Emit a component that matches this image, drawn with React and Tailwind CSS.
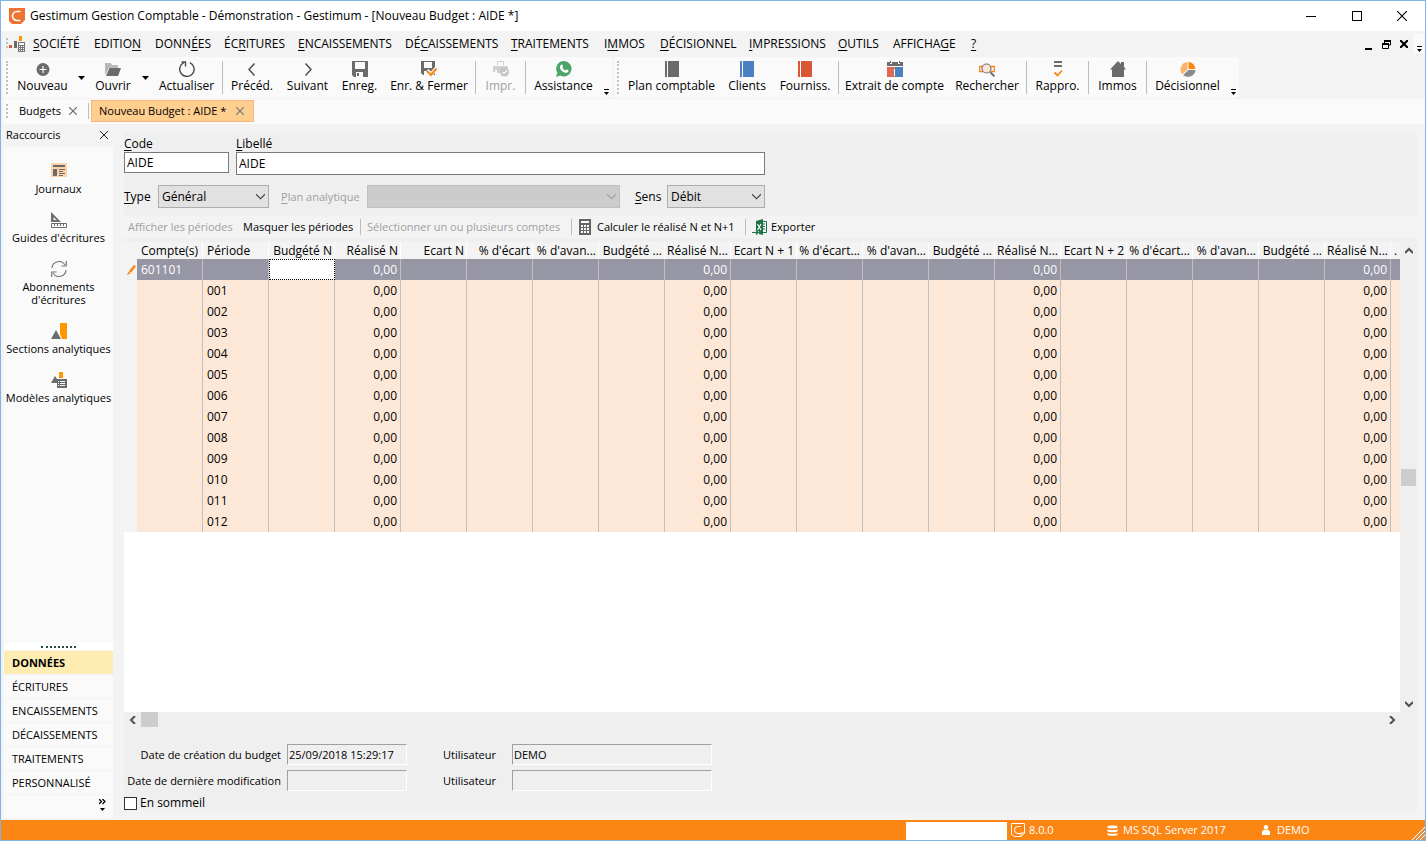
import React, { useState } from 'react';
import clsx from 'clsx';

const MENUS = [
  { label: 'SOCIÉTÉ', key: 0, width: 'w-[61px]' },
  { label: 'EDITION', key: 6, width: 'w-[61px]' },
  { label: 'DONNÉES', key: 4, width: 'w-[69px]' },
  { label: 'ÉCRITURES', key: 2, width: 'w-[74px]' },
  { label: 'ENCAISSEMENTS', key: 0, width: 'w-[107px]' },
  { label: 'DÉCAISSEMENTS', key: 2, width: 'w-[106px]' },
  { label: 'TRAITEMENTS', key: 0, width: 'w-[93px]' },
  { label: 'IMMOS', key: 1, width: 'w-[56px]' },
  { label: 'DÉCISIONNEL', key: 0, width: 'w-[89px]' },
  { label: 'IMPRESSIONS', key: 0, width: 'w-[89px]' },
  { label: 'OUTILS', key: 0, width: 'w-[55px]' },
  { label: 'AFFICHAGE', key: 7, width: 'w-[78px]' },
  { label: '?', key: 0, width: 'w-[24px]' },
];

const COLUMNS = [
  'Compte(s)', 'Période', 'Budgété N', 'Réalisé N', 'Ecart N', "% d'écart", "% d'avan...",
  'Budgété ...', 'Réalisé N...', 'Ecart N + 1', "% d'écart...", "% d'avan...",
  'Budgété ...', 'Réalisé N...', 'Ecart N + 2', "% d'écart...", "% d'avan...",
  'Budgété ...', 'Réalisé N...',
];

const PERIODS = ['001', '002', '003', '004', '005', '006', '007', '008', '009', '010', '011', '012'];

const SECTIONS = ['DONNÉES', 'ÉCRITURES', 'ENCAISSEMENTS', 'DÉCAISSEMENTS', 'TRAITEMENTS', 'PERSONNALISÉ'];

// Texte avec la lettre d'accès rapide soulignée
const Mnemonic = ({ text, at = 0 }) => (
  <span>
    {text.slice(0, at)}
    <span className="underline underline-offset-2">{text[at]}</span>
    {text.slice(at + 1)}
  </span>
);

const Svg = ({ children, className = 'w-4 h-4', viewBox = '0 0 16 16' }) => (
  <svg className={clsx('shrink-0', className)} viewBox={viewBox} fill="none" aria-hidden="true">
    {children}
  </svg>
);

/* ---------- Icônes ---------- */

const NewIcon = () => (
  <Svg>
    <circle cx="8" cy="8.5" r="6.5" fill="#6b6b6b" />
    <path d="M8 5v7M4.5 8.5h7" stroke="#fff" strokeWidth="1.2" />
  </Svg>
);

const OpenIcon = () => (
  <Svg>
    <path d="M0 2h6l1 2h6v3H4l-3 6H0z" fill="#b9b9b9" />
    <path d="M4.5 7H16l-3 8H1z" fill="#6b6b6b" />
  </Svg>
);

const RefreshIcon = () => (
  <Svg>
    <path d="M10.8 1.6A7.2 7.2 0 1 1 4.8 1.7" stroke="#4a4a4a" strokeWidth="1.4" />
    <path d="M2.5 1h4v4.5" stroke="#4a4a4a" strokeWidth="1.4" />
  </Svg>
);

const PrevIcon = () => (
  <Svg><path d="M10.5 2.5L5 8.5l5.5 6" stroke="#4a4a4a" strokeWidth="1.4" /></Svg>
);

const NextIcon = () => (
  <Svg><path d="M5.5 2.5L11 8.5l-5.5 6" stroke="#4a4a4a" strokeWidth="1.4" /></Svg>
);

const SaveIcon = () => (
  <Svg>
    <path d="M0 0h16v16H2l-2-2z" fill="#6b6b6b" />
    <path d="M3 1h10v7H3zM4 11h7v5H4z" fill="#fafafa" />
    <path d="M5 12h2v3H5z" fill="#6b6b6b" />
  </Svg>
);

const SaveCloseIcon = () => (
  <Svg>
    <path d="M0 0h14v14H2l-2-2z" fill="#6b6b6b" />
    <path d="M3 1h8v6H3zM3 10h5v4H3z" fill="#fafafa" />
    <path d="M6 9.5l4 4L16 6.500" stroke="#fafafa" strokeWidth="4" />
    <path d="M6 10l4 4 5.500-6.500" stroke="#fb8614" strokeWidth="2.2" />
  </Svg>
);

const PrintIcon = () => (
  <Svg>
    <path d="M4.5 4V.5h6V4" stroke="#d0d0d0" />
    <path d="M0 5h15v3h-5l-3 4H4V9H2v2H0z" fill="#d0d0d0" />
    <circle cx="11.5" cy="11" r="4.5" fill="#c4c4c4" />
    <path d="M9.5 11l1.5 1.5 3-3" stroke="#fafafa" strokeWidth="1.2" />
  </Svg>
);

const PhoneIcon = () => (
  <Svg>
    <path d="M8 0a7.700 7.700 0 1 1-3.600 14.600L0 16l1.400-4.200A7.700 7.700 0 0 1 8 0z" fill="#4aa566" />
    <path
      d="M5.300 3.800c.7-.6 1.200-.2 1.700 1.200.2.600-.1.900-.6 1.500.7 1.400 1.700 2.300 3.100 2.900.7-.8.900-1.100 1.500-.8 1.500.7 1.700.9 1.400 1.700-.5 1.400-2.100 1.900-3.900 1.200C6.300 10.700 4.600 9 4 7c-.3-1.300.1-2.500 1.300-3.200z"
      fill="#fff"
    />
  </Svg>
);

const BookIcon = ({ color }) => (
  <Svg>
    <path d="M1 0h2v16H1zM4 0h11v16H4z" fill={color} />
  </Svg>
);

const StatementIcon = () => (
  <Svg>
    <path d="M0 1h3v2h2V1h6v2h2V1h3v4H0z" fill="#6b6b6b" />
    <path d="M3.5 0v2M12.5 0v2" stroke="#6b6b6b" />
    <path d="M0 6h8v10H0z" fill="#de6a55" />
    <path d="M8 6h8v10H8z" fill="#4a7fc1" />
    <path d="M7.5 8v7" stroke="#fff" />
  </Svg>
);

const SearchIcon = () => (
  <Svg>
    <path d="M4 5.5H.5v5H4M12 5.5h3.500v5H12" stroke="#fb8614" strokeWidth="1.4" />
    <circle cx="7.5" cy="7.5" r="4.5" fill="#fde6d6" stroke="#777" strokeWidth="1.2" />
    <path d="M11 11l4.500 4.500" stroke="#777" strokeWidth="2" />
  </Svg>
);

const MatchIcon = () => (
  <Svg>
    <path d="M4 0h8v2H4zM4 4h8v2H4z" fill="#6b6b6b" />
    <path d="M4.500 11.500L7.500 14.500l4.500-5" stroke="#fb8614" strokeWidth="1.8" />
  </Svg>
);

const HouseIcon = () => (
  <Svg>
    <path d="M8 0l3 3V1h3v5l2 2.500h-2V16H2V8.500H0z" fill="#6b6b6b" />
  </Svg>
);

const PieIcon = () => (
  <Svg>
    <path d="M7.500 1v7.200L2.300 13.300A7.500 7.500 0 0 1 7.500 1z" fill="#fbb26a" />
    <path d="M8.500 1a7.300 7.300 0 0 1 7 7h-7z" fill="#fb8614" />
    <path d="M15.500 9a7.500 7.500 0 0 1-12.300 5L8.300 9z" fill="#8a8a8a" />
  </Svg>
);

const LogoIcon = () => (
  <Svg className="w-4 h-4">
    <path d="M0 0h16v12l-4 4H3l-3-3z" fill="#ee7330" />
    <path d="M11.500 3.500H8a4.500 4.500 0 0 0 0 9h3.500" stroke="#fff" strokeWidth="1.6" />
  </Svg>
);

const MenuAppIcon = () => (
  <Svg className="w-[19px] h-4" viewBox="0 0 19 16">
    <path d="M0 2h2v2H0zM0 6h2v2H0zM0 10h2v2H0z" fill="#c0c0c0" />
    <path d="M3 9h3v3H3z" fill="#d95b3a" />
    <path d="M8 5h3v7H8z" fill="#6b6b6b" />
    <path d="M13 0h3v5h-3z" fill="#ff9800" />
    <path d="M12 6h7v10h-7z" fill="#777" />
    <path d="M13 7h5v2h-5zM13 10h1v1h-1zM15 10h1v1h-1zM17 10h1v1h-1zM13 12h1v1h-1zM15 12h1v1h-1zM17 12h1v1h-1zM13 14h1v1h-1zM15 14h1v1h-1zM17 14h1v1h-1z" fill="#fff" />
  </Svg>
);

const JournalIcon = () => (
  <Svg>
    <path d="M0 0h16v14H0z" fill="#fcd3a8" />
    <path d="M2 2h12v2H2zM2 6h4v7H2zM8 6h6v1H8zM8 8h4v1H8zM8 10h6v1H8zM8 12h4v1H8z" fill="#6b6b6b" />
  </Svg>
);

const RulerIcon = () => (
  <Svg>
    <path d="M0 0l10 10H0zM2.500 5v3h3z" fill="#6b6b6b" fillRule="evenodd" />
    <path d="M.5 11.500h15v4H.5z" stroke="#6b6b6b" />
    <path d="M3.500 12v2M6.500 12v2M9.500 12v2M12.500 12v2" stroke="#6b6b6b" />
  </Svg>
);

const LoopIcon = () => (
  <Svg>
    <path d="M1 7a7 7 0 0 1 13-3M15 9a7 7 0 0 1-13 3" stroke="#777" strokeWidth="1.2" />
    <path d="M15.300 0v5h-5M.7 16v-5h5" stroke="#777" strokeWidth="1.2" />
  </Svg>
);

const SectionIcon = () => (
  <Svg>
    <path d="M9 0h7v16h-5L9 11z" fill="#ff9800" />
    <path d="M0 16l5-9 5 9z" fill="#6b6b6b" />
  </Svg>
);

const ModelIcon = () => (
  <Svg>
    <path d="M8 0h4v6H8z" fill="#ff9800" />
    <path d="M0 11l4-7 2 3v4z" fill="#6b6b6b" />
    <path d="M6 7h10v9H6z" fill="#6b6b6b" />
    <path d="M7 9h1v1H7zM9 9h5v1H9zM7 11h1v1H7zM9 11h5v1H9zM7 13h1v1H7zM9 13h5v1H9z" fill="#fff" />
  </Svg>
);

const CalculatorIcon = () => (
  <Svg className="w-3 h-4" viewBox="0 0 12 16">
    <path d="M0 0h12v16H0z" fill="#666" />
    <path d="M2 2h8v2H2zM2 6h2v2H2zM5 6h2v2H5zM8 6h2v2H8zM2 9h2v2H2zM5 9h2v2H5zM8 9h2v2H8zM2 12h2v2H2zM5 12h2v2H5zM8 12h2v2H8z" fill="#fff" />
  </Svg>
);

const ExcelIcon = () => (
  <Svg>
    <path d="M10.500 2.500h4v11h-4" stroke="#1e7145" />
    <path d="M11 5h2M11 7.500h2M11 10h2" stroke="#1e7145" strokeWidth="1.2" />
    <path d="M4 2l7-2v16l-4-1v-3H4z" fill="#1e7145" />
    <path d="M5.500 5l3.500 6M9 5l-3.500 6" stroke="#fff" strokeWidth="1.2" />
    <path d="M0 13.500h6M4 11.500l2.200 2L4 15.500" stroke="#1e7145" strokeWidth="1.2" />
  </Svg>
);

const Cross = ({ className = 'w-2 h-2', color = '#6b6b6b', width = 1.2 }) => (
  <Svg className={className} viewBox="0 0 8 8">
    <path d="M0 0l8 8M8 0L0 8" stroke={color} strokeWidth={width} />
  </Svg>
);

const Chevron = ({ d, color = '#505050', className = 'w-2 h-2', width = 2 }) => (
  <Svg className={className} viewBox="0 0 8 8">
    <path d={d} stroke={color} strokeWidth={width} />
  </Svg>
);

const OverflowMark = () => (
  <Svg className="w-[5px] h-1.5" viewBox="0 0 5 6">
    <path d="M0 0h5v1H0zM0 3h5L2.500 6z" fill="#000" />
  </Svg>
);

/* ---------- Barre d'outils ---------- */

const Grip = () => (
  <div className="w-2 shrink-0 flex justify-center py-1">
    <div className="w-0 border-l-2 border-dotted border-[#c0c0c0]" />
  </div>
);

const Divider = () => <div className="w-px mx-px my-1 bg-[#bdbdbd] shrink-0" />;

const ToolButton = ({ label, icon, width, disabled }) => (
  <button
    type="button"
    disabled={disabled}
    className={clsx(
      'shrink-0 flex flex-col items-center gap-px pt-1 whitespace-nowrap leading-4 hover:bg-[#fdebd0]',
      width,
      disabled && 'text-[#a0a0a0]'
    )}
  >
    {icon}
    {label}
  </button>
);

const DropArrow = ({ label }) => (
  <button type="button" aria-label={label} className="w-3.5 shrink-0 flex justify-center items-center">
    <Svg className="w-[7px] h-1" viewBox="0 0 7 4"><path d="M0 0h7L3.500 4z" fill="#000" /></Svg>
  </button>
);

const OverflowButton = () => (
  <button type="button" aria-label="Autres boutons" className="w-3 shrink-0 flex justify-center items-end pb-[3px]">
    <OverflowMark />
  </button>
);

const Toolbars = () => (
  <div className="flex gap-0.5 h-[41px] pl-0.5">
    <div className="flex bg-[#fafafa] rounded-sm" role="toolbar" aria-label="Fiche">
      <Grip />
      <ToolButton label="Nouveau" icon={<NewIcon />} width="w-[63px]" />
      <DropArrow label="Options Nouveau" />
      <ToolButton label="Ouvrir" icon={<OpenIcon />} width="w-[50px]" />
      <DropArrow label="Options Ouvrir" />
      <ToolButton label="Actualiser" icon={<RefreshIcon />} width="w-[69px]" />
      <Divider />
      <ToolButton label="Précéd." icon={<PrevIcon />} width="w-14" />
      <ToolButton label="Suivant" icon={<NextIcon />} width="w-[55px]" />
      <ToolButton label="Enreg." icon={<SaveIcon />} width="w-[49px]" />
      <ToolButton label="Enr. & Fermer" icon={<SaveCloseIcon />} width="w-[90px]" />
      <Divider />
      <ToolButton label="Impr." icon={<PrintIcon />} width="w-[47px]" disabled />
      <Divider />
      <ToolButton label="Assistance" icon={<PhoneIcon />} width="w-[73px]" />
      <OverflowButton />
    </div>
    <div className="flex bg-[#fafafa] rounded-sm" role="toolbar" aria-label="Consultation">
      <Grip />
      <ToolButton label="Plan comptable" icon={<BookIcon color="#6b6b6b" />} width="w-[99px]" />
      <ToolButton label="Clients" icon={<BookIcon color="#4a7fc1" />} width="w-[52px]" />
      <ToolButton label="Fourniss." icon={<BookIcon color="#d95734" />} width="w-16" />
      <Divider />
      <ToolButton label="Extrait de compte" icon={<StatementIcon />} width="w-[109px]" />
      <ToolButton label="Rechercher" icon={<SearchIcon />} width="w-[76px]" />
      <Divider />
      <ToolButton label="Rappro." icon={<MatchIcon />} width="w-[59px]" />
      <Divider />
      <ToolButton label="Immos" icon={<HouseIcon />} width="w-[55px]" />
      <Divider />
      <ToolButton label="Décisionnel" icon={<PieIcon />} width="w-[79px]" />
      <OverflowButton />
    </div>
  </div>
);

/* ---------- En-tête de la fenêtre ---------- */

const TitleBar = () => (
  <header className="h-[30px] shrink-0 bg-white flex items-center pl-2">
    <LogoIcon />
    <h1 className="ml-[5px] flex-1 whitespace-nowrap">
      Gestimum Gestion Comptable - Démonstration - Gestimum - [Nouveau Budget : AIDE *]
    </h1>
    <button type="button" aria-label="Réduire" className="w-[46px] h-full flex items-center justify-center">
      <span className="w-2.5 h-px bg-black" />
    </button>
    <button type="button" aria-label="Agrandir" className="w-[45px] h-full flex items-center justify-center">
      <span className="w-2.5 h-2.5 border border-black" />
    </button>
    <button type="button" aria-label="Fermer" className="w-[46px] h-full flex items-center justify-center">
      <Cross className="w-2.5 h-2.5" color="#000" width={0.9} />
    </button>
  </header>
);

const MenuBar = () => (
  <nav className="h-[26px] shrink-0 flex items-center pl-[5px]" aria-label="Menu principal">
    <MenuAppIcon />
    <div className="flex-1 flex pl-2">
      {MENUS.map((menu) => (
        <button key={menu.label} type="button" className={clsx('text-left whitespace-nowrap shrink-0', menu.width)}>
          <Mnemonic text={menu.label} at={menu.key} />
        </button>
      ))}
    </div>
    <button type="button" aria-label="Réduire la fiche" className="w-5 h-4 flex items-end justify-center pb-0.5">
      <span className="w-[7px] h-0.5 bg-black" />
    </button>
    <button type="button" aria-label="Restaurer la fiche" className="w-4 h-4 flex items-center justify-center">
      <Svg className="w-[9px] h-[9px]" viewBox="0 0 9 9">
        <path d="M2.500 3V1h6v4H7M.5 4h6v4.500h-6z" stroke="#000" />
        <path d="M2 0h7v2H2zM0 3h7v2H0z" fill="#000" />
      </Svg>
    </button>
    <button type="button" aria-label="Fermer la fiche" className="w-5 h-4 flex items-center justify-center">
      <Cross color="#000" width={2.2} />
    </button>
    <button type="button" aria-label="Autres menus" className="w-[11px] h-5 bg-[#fafafa] flex items-end justify-center pb-0.5">
      <OverflowMark />
    </button>
  </nav>
);

const TabStrip = () => (
  <div className="h-[25px] shrink-0 mt-px ml-0.5 bg-[#fafafa] flex items-start pt-px text-[11px]">
    <div className="flex h-[22px]">
      <Grip />
    </div>
    <div className="flex items-center h-[22px] w-[77px] pl-2">
      <button type="button" className="flex-1 text-left">Budgets</button>
      <button type="button" aria-label="Fermer Budgets" className="mr-2.5 p-px"><Cross /></button>
    </div>
    <div className="w-px h-4 mt-[3px] mr-0.5 bg-[#bdbdbd]" />
    <div className="flex items-center h-[22px] w-[163px] pl-[7px] bg-[#ffcf90] border border-[#ffb27f]">
      <button type="button" className="flex-1 text-left whitespace-nowrap">Nouveau Budget : AIDE *</button>
      <button type="button" aria-label="Fermer Nouveau Budget" className="mr-2 p-px"><Cross color="#777" /></button>
    </div>
  </div>
);

/* ---------- Volet Raccourcis ---------- */

const Shortcut = ({ icon, children }) => (
  <button type="button" className="flex flex-col items-center gap-[3px] w-full mb-[17px] leading-[13px] text-[11px] whitespace-nowrap">
    {icon}
    <span>{children}</span>
  </button>
);

const Sidebar = () => {
  const [section, setSection] = useState('DONNÉES');

  return (
    <aside className="w-[109px] ml-[3px] mr-[11px] shrink-0 flex flex-col">
      <div className="h-[23px] shrink-0 flex items-center justify-between pl-0.5 pr-1 pb-0.5 text-[11px]">
        Raccourcis
        <button type="button" aria-label="Fermer le volet" className="p-px"><Cross color="#222" width={1} /></button>
      </div>
      <div className="flex-1 bg-[#fafafa] pt-4">
        <Shortcut icon={<JournalIcon />}>Journaux</Shortcut>
        <Shortcut icon={<RulerIcon />}>Guides d'écritures</Shortcut>
        <Shortcut icon={<LoopIcon />}>Abonnements<br />d'écritures</Shortcut>
        <Shortcut icon={<SectionIcon />}>Sections analytiques</Shortcut>
        <Shortcut icon={<ModelIcon />}>Modèles analytiques</Shortcut>
      </div>
      <div className="h-[7px] bg-white flex justify-center items-center">
        <div className="w-[35px] border-t-2 border-dotted border-[#2b4a48]" />
      </div>
      {SECTIONS.map((name) => (
        <button
          key={name}
          type="button"
          onClick={() => setSection(name)}
          className={clsx(
            'h-[23px] mt-px pl-2 text-left text-[11px]',
            section === name ? 'bg-[#ffecb3] font-bold' : 'bg-[#fafafa]'
          )}
        >
          {name}
        </button>
      ))}
      <div className="h-[23px] mt-px bg-[#fafafa] flex justify-end items-start pt-1 pr-[7px]">
        <button type="button" aria-label="Configurer les boutons">
          <Svg className="w-[7px] h-3" viewBox="0 0 7 12">
            <path d="M0 0l2.500 2.500L0 5M3.500 0L6 2.500 3.500 5" stroke="#000" strokeWidth="1.3" />
            <path d="M1 9h5l-2.500 3z" fill="#000" />
          </Svg>
        </button>
      </div>
    </aside>
  );
};

/* ---------- Formulaire ---------- */

const Dropdown = ({ id, children, width, disabled }) => (
  <div className={clsx('relative shrink-0', width)}>
    <select
      id={id}
      disabled={disabled}
      className={clsx(
        'w-full h-[23px] pl-[3px] appearance-none border rounded-none',
        disabled ? 'bg-[#cccccc] border-[#bfbfbf] opacity-100' : 'bg-[#e1e1e1] border-[#adadad]'
      )}
    >
      {children}
    </select>
    <div className="absolute right-1 top-[7px] pointer-events-none">
      <Chevron d="M0 2l4 4 4-4" width={1} color={disabled ? '#a0a0a0' : '#404040'} className="w-[9px] h-[9px]" />
    </div>
  </div>
);

const BudgetForm = () => (
  <form>
    <div className="flex gap-[7px] pt-1 items-start">
      <div className="flex flex-col">
        <label htmlFor="code" className="leading-4"><Mnemonic text="Code" /></label>
        <input id="code" defaultValue="AIDE" className="w-[105px] h-[21px] px-0.5 bg-white border border-[#7a7a7a]" />
      </div>
      <div className="flex flex-col">
        <label htmlFor="libelle" className="leading-4"><Mnemonic text="Libellé" /></label>
        <input id="libelle" defaultValue="AIDE" className="w-[529px] h-[23px] px-0.5 bg-white border border-[#7a7a7a]" />
      </div>
    </div>
    <div className="flex items-center mt-2.5">
      <label htmlFor="type" className="w-[34px]"><Mnemonic text="Type" /></label>
      <Dropdown id="type" width="w-[111px]">
        <option>Général</option>
        <option>Analytique</option>
      </Dropdown>
      <label htmlFor="plan" className="w-[86px] ml-3 text-[11px] whitespace-nowrap text-[#a0a0a0]"><Mnemonic text="Plan analytique" /></label>
      <Dropdown id="plan" width="w-[253px]" disabled />
      <label htmlFor="sens" className="w-8 ml-[15px]"><Mnemonic text="Sens" /></label>
      <Dropdown id="sens" width="w-[98px]">
        <option>Débit</option>
        <option>Crédit</option>
      </Dropdown>
    </div>
  </form>
);

const GridToolbar = () => (
  <div className="h-[22px] mt-2 flex items-center bg-[#f3f3f3] text-[11px] whitespace-nowrap" role="toolbar" aria-label="Périodes">
    <button type="button" disabled className="w-[115px] pl-1 text-left text-[#a0a0a0]">Afficher les périodes</button>
    <button type="button" className="w-[121px] pl-1 text-left">Masquer les périodes</button>
    <div className="w-px h-4 bg-[#bdbdbd]" />
    <button type="button" disabled className="w-[210px] pl-1.5 text-left text-[#a0a0a0]">Sélectionner un ou plusieurs comptes</button>
    <div className="w-px h-4 bg-[#bdbdbd]" />
    <button type="button" className="w-[173px] pl-[7px] flex items-center gap-1.5">
      <CalculatorIcon />
      Calculer le réalisé N et N+1
    </button>
    <div className="w-px h-4 bg-[#bdbdbd]" />
    <button type="button" className="pl-1.5 flex items-center gap-[3px]">
      <ExcelIcon />
      Exporter
    </button>
  </div>
);

/* ---------- Grille du budget ---------- */

const isAmount = (title) => title.startsWith('Réalisé');

const BudgetTable = () => (
  <table className="w-full table-fixed border-separate border-spacing-0 whitespace-nowrap">
    <colgroup>
      <col className="w-[13px]" />
      {COLUMNS.map((title, i) => <col key={i} className="w-[66px]" />)}
      <col />
    </colgroup>
    <thead>
      <tr className="h-[17px] bg-[#f3f3f3]">
        <th className="p-0" />
        {COLUMNS.map((title, i) => (
          <th
            key={i}
            className={clsx(
              'p-0 font-normal leading-[17px] border-r border-white',
              i < 2 ? 'text-left pl-1' : 'text-right pr-0.5'
            )}
          >
            {title}
          </th>
        ))}
        <th className="p-0 pl-[3px] text-left font-normal leading-[17px]">.</th>
      </tr>
    </thead>
    <tbody>
      <tr className="h-[21px] bg-[#9696a5] text-white">
        <td className="p-0 bg-[#f3f3f3]">
          <Svg className="w-[9px] h-2.5 ml-[3px]" viewBox="0 0 9 10">
            <path d="M7 0l2 1-5 7-2-2zM1.500 6.500l2 2L0 10z" fill="#fb8614" />
          </Svg>
        </td>
        {COLUMNS.map((title, i) => (
          <td
            key={i}
            className={clsx(
              'p-0 leading-[19px]',
              i < 2 ? 'pl-1' : 'pr-[3px] text-right',
              i === 2 ? 'bg-white border border-dotted border-black' : 'border-r border-[#c0c0c0]'
            )}
          >
            {i === 0 && '601101'}
            {isAmount(title) && '0,00'}
          </td>
        ))}
        <td className="p-0" />
      </tr>
      {PERIODS.map((period) => (
        <tr key={period} className="h-[21px] bg-[#fde8d7]">
          <td className="p-0 bg-[#f3f3f3]" />
          {COLUMNS.map((title, i) => (
            <td
              key={i}
              className={clsx('p-0 leading-[19px] border-r border-[#c0c0c0]', i < 2 ? 'pl-1' : 'pr-[3px] text-right')}
            >
              {i === 1 && period}
              {isAmount(title) && '0,00'}
            </td>
          ))}
          <td className="p-0" />
        </tr>
      ))}
    </tbody>
  </table>
);

const BudgetGrid = () => (
  <div className="flex-1 min-h-0 mt-1 flex flex-col">
    <div className="flex-1 min-h-0 flex">
      <div className="flex-1 min-w-0 overflow-hidden bg-white">
        <BudgetTable />
      </div>
      <div className="w-[17px] shrink-0 flex flex-col justify-between items-center">
        <button type="button" aria-label="Défiler vers le haut" className="h-[17px] flex items-center">
          <Chevron d="M0 6l4-4 4 4" />
        </button>
        <div className="w-[15px] h-[17px] bg-[#cdcdcd]" />
        <button type="button" aria-label="Défiler vers le bas" className="h-[17px] flex items-center">
          <Chevron d="M0 2l4 4 4-4" />
        </button>
      </div>
    </div>
    <div className="h-[15px] mr-[17px] shrink-0 flex items-center">
      <button type="button" aria-label="Défiler vers la gauche" className="w-[17px] flex justify-center">
        <Chevron d="M6 0L2 4l4 4" />
      </button>
      <div className="w-[17px] h-full bg-[#cdcdcd]" />
      <button type="button" aria-label="Défiler vers la droite" className="w-[17px] ml-auto flex justify-center">
        <Chevron d="M2 0l4 4-4 4" />
      </button>
    </div>
  </div>
);

const SUNKEN = 'h-[21px] px-px border border-t-[#a0a0a0] border-l-[#a0a0a0] border-b-white border-r-white bg-[#efefef]';

const BudgetFooter = () => (
  <div className="pt-[17px]">
    <div className="grid grid-cols-[157px_126px_105px_200px] items-center gap-y-[5px] text-[11px] whitespace-nowrap">
      <label htmlFor="cree" className="text-right">Date de création du budget</label>
      <input id="cree" readOnly defaultValue="25/09/2018 15:29:17" className={clsx(SUNKEN, 'ml-1.5')} />
      <label htmlFor="creePar" className="ml-9">Utilisateur</label>
      <input id="creePar" readOnly defaultValue="DEMO" className={SUNKEN} />
      <label htmlFor="modifie" className="text-right">Date de dernière modification</label>
      <input id="modifie" readOnly defaultValue="" className={clsx(SUNKEN, 'ml-1.5')} />
      <label htmlFor="modifiePar" className="ml-9">Utilisateur</label>
      <input id="modifiePar" readOnly defaultValue="" className={SUNKEN} />
    </div>
    <label className="mt-1 w-fit flex items-center gap-[3px] leading-4">
      <input type="checkbox" className="appearance-none w-[13px] h-[13px] bg-white border border-[#333] checked:bg-[#fb8614]" />
      En sommeil
    </label>
  </div>
);

/* ---------- Barre d'état ---------- */

const StatusBar = () => (
  <footer className="h-5 shrink-0 bg-[#fb8614] text-white text-[11px] flex items-center justify-end whitespace-nowrap">
    <div className="w-[101px] h-[18px] mt-0.5 bg-white" />
    <div className="w-[100px] pl-1 flex items-center gap-1">
      <Svg className="w-3.5 h-3.5" viewBox="0 0 14 14">
        <path d="M.5.5h13v9.500L10 13.500H3.500l-3-2z" stroke="#fff" />
        <path d="M10 3.500H7a3.500 3.500 0 0 0 0 7h3M13.500 10H10v3.500" stroke="#fff" />
      </Svg>
      8.0.0
    </div>
    <div className="w-[155px] flex items-center gap-[5px]">
      <Svg className="w-[11px] h-[11px]" viewBox="0 0 11 11">
        <path d="M.5 1.500C1 .2 10 .2 10.500 1.500v1C10 3.800 1 3.800.5 2.500zM.5 4.300c2 1.200 8 1.200 10 0v1.900C10 7.500 1 7.500.5 6.200zM.5 8c2 1.200 8 1.200 10 0v1.700c-.5 1.300-9.500 1.300-10 0z" fill="#fff" />
      </Svg>
      MS SQL Server 2017
    </div>
    <div className="w-[150px] flex items-center gap-[7px]">
      <Svg className="w-2 h-2.5" viewBox="0 0 8 10">
        <circle cx="4" cy="2.2" r="2.2" fill="#fff" />
        <path d="M0 10V7c0-1.600 1.500-2.200 4-2.200S8 5.400 8 7v3z" fill="#fff" />
      </Svg>
      DEMO
    </div>
    <Svg className="w-[13px] h-[13px] self-end" viewBox="0 0 13 13">
      <path d="M0 13L13 0M4 13l9-9M8 13l5-5" stroke="#fff" />
      <path d="M1.500 13L13 1.500M5.500 13L13 5.500M9.500 13l3.500-3.500" stroke="#a8a8a8" />
    </Svg>
  </footer>
);

const App = () => (
  <div className="min-h-screen flex flex-col bg-[#f3f3f3] border border-[#7eb4ea] text-black text-[12px] leading-4 font-['Open_Sans','Noto_Sans',sans-serif]">
    <TitleBar />
    <MenuBar />
    <Toolbars />
    <TabStrip />
    <div className="flex-1 flex pb-0.5">
      <Sidebar />
      <main className="flex-1 min-w-0 mt-2 mb-[7px] mr-2 flex flex-col bg-[#efefef]">
        <BudgetForm />
        <GridToolbar />
        <BudgetGrid />
        <BudgetFooter />
      </main>
    </div>
    <StatusBar />
  </div>
);

export default App;
